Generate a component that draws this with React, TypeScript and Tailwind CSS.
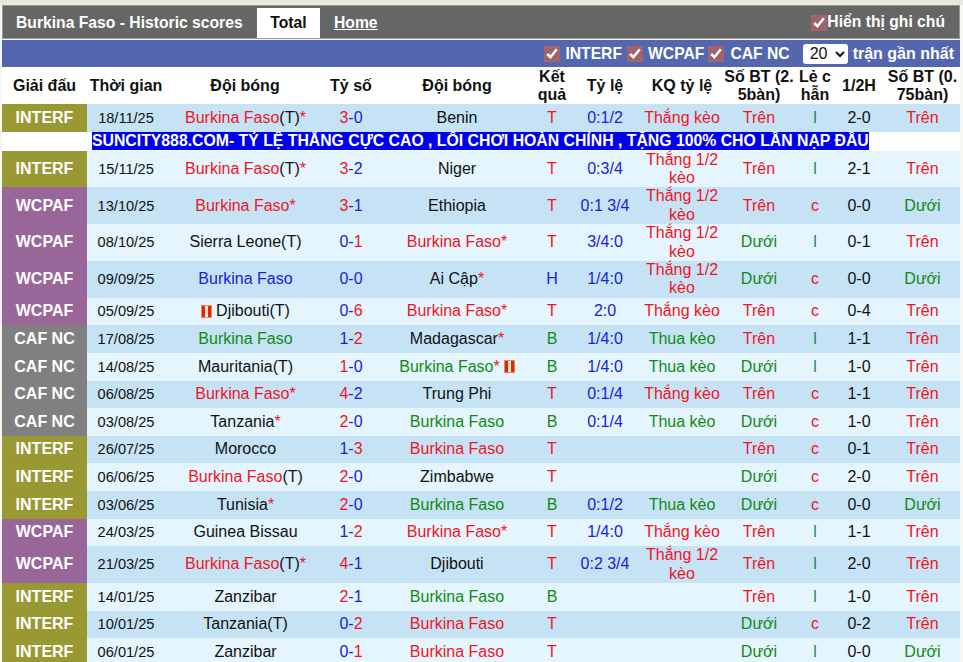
const R = "text-[#f2141e]";
const G = "text-[#118a11]";
const B = "text-[#2020d8]";
const K = "text-[#111]";

type Row = {
  lg: "INTERF" | "WCPAF" | "CAF NC";
  date: string;
  h: string; hc: string; hs?: string; hStar?: boolean; hCard?: boolean;
  s1: string; s2: string;
  a: string; ac: string; aStar?: boolean; aCard?: boolean;
  res: string; odd: string; kq: string; ou: string; lc: string; half: string; ou2: string;
};

const BF = "Burkina Faso";
const rows: Row[] = [
  { lg: "INTERF", date: "18/11/25", h: BF, hc: R, hs: "(T)", hStar: true, s1: "3", s2: "0", a: "Benin", ac: K, res: "T", odd: "0:1/2", kq: "Thắng kèo", ou: "Trên", lc: "l", half: "2-0", ou2: "Trên" },
  { lg: "INTERF", date: "15/11/25", h: BF, hc: R, hs: "(T)", hStar: true, s1: "3", s2: "2", a: "Niger", ac: K, res: "T", odd: "0:3/4", kq: "Thắng 1/2 kèo", ou: "Trên", lc: "l", half: "2-1", ou2: "Trên" },
  { lg: "WCPAF", date: "13/10/25", h: BF, hc: R, hStar: true, s1: "3", s2: "1", a: "Ethiopia", ac: K, res: "T", odd: "0:1 3/4", kq: "Thắng 1/2 kèo", ou: "Trên", lc: "c", half: "0-0", ou2: "Dưới" },
  { lg: "WCPAF", date: "08/10/25", h: "Sierra Leone(T)", hc: K, s1: "0", s2: "1", a: BF, ac: R, aStar: true, res: "T", odd: "3/4:0", kq: "Thắng 1/2 kèo", ou: "Dưới", lc: "l", half: "0-1", ou2: "Trên" },
  { lg: "WCPAF", date: "09/09/25", h: BF, hc: B, s1: "0", s2: "0", a: "Ai Cập", ac: K, aStar: true, res: "H", odd: "1/4:0", kq: "Thắng 1/2 kèo", ou: "Dưới", lc: "c", half: "0-0", ou2: "Dưới" },
  { lg: "WCPAF", date: "05/09/25", h: "Djibouti(T)", hc: K, hCard: true, s1: "0", s2: "6", a: BF, ac: R, aStar: true, res: "T", odd: "2:0", kq: "Thắng kèo", ou: "Trên", lc: "c", half: "0-4", ou2: "Trên" },
  { lg: "CAF NC", date: "17/08/25", h: BF, hc: G, s1: "1", s2: "2", a: "Madagascar", ac: K, aStar: true, res: "B", odd: "1/4:0", kq: "Thua kèo", ou: "Trên", lc: "l", half: "1-1", ou2: "Trên" },
  { lg: "CAF NC", date: "14/08/25", h: "Mauritania(T)", hc: K, s1: "1", s2: "0", a: BF, ac: G, aStar: true, aCard: true, res: "B", odd: "1/4:0", kq: "Thua kèo", ou: "Dưới", lc: "l", half: "1-0", ou2: "Trên" },
  { lg: "CAF NC", date: "06/08/25", h: BF, hc: R, hStar: true, s1: "4", s2: "2", a: "Trung Phi", ac: K, res: "T", odd: "0:1/4", kq: "Thắng kèo", ou: "Trên", lc: "c", half: "1-1", ou2: "Trên" },
  { lg: "CAF NC", date: "03/08/25", h: "Tanzania", hc: K, hStar: true, s1: "2", s2: "0", a: BF, ac: G, res: "B", odd: "0:1/4", kq: "Thua kèo", ou: "Dưới", lc: "c", half: "1-0", ou2: "Trên" },
  { lg: "INTERF", date: "26/07/25", h: "Morocco", hc: K, s1: "1", s2: "3", a: BF, ac: R, res: "T", odd: "", kq: "", ou: "Trên", lc: "c", half: "0-1", ou2: "Trên" },
  { lg: "INTERF", date: "06/06/25", h: BF, hc: R, hs: "(T)", s1: "2", s2: "0", a: "Zimbabwe", ac: K, res: "T", odd: "", kq: "", ou: "Dưới", lc: "c", half: "2-0", ou2: "Trên" },
  { lg: "INTERF", date: "03/06/25", h: "Tunisia", hc: K, hStar: true, s1: "2", s2: "0", a: BF, ac: G, res: "B", odd: "0:1/2", kq: "Thua kèo", ou: "Dưới", lc: "c", half: "0-0", ou2: "Dưới" },
  { lg: "WCPAF", date: "24/03/25", h: "Guinea Bissau", hc: K, s1: "1", s2: "2", a: BF, ac: R, aStar: true, res: "T", odd: "1/4:0", kq: "Thắng kèo", ou: "Trên", lc: "l", half: "1-1", ou2: "Trên" },
  { lg: "WCPAF", date: "21/03/25", h: BF, hc: R, hs: "(T)", hStar: true, s1: "4", s2: "1", a: "Djibouti", ac: K, res: "T", odd: "0:2 3/4", kq: "Thắng 1/2 kèo", ou: "Trên", lc: "l", half: "2-0", ou2: "Trên" },
  { lg: "INTERF", date: "14/01/25", h: "Zanzibar", hc: K, s1: "2", s2: "1", a: BF, ac: G, res: "B", odd: "", kq: "", ou: "Trên", lc: "l", half: "1-0", ou2: "Trên" },
  { lg: "INTERF", date: "10/01/25", h: "Tanzania(T)", hc: K, s1: "0", s2: "2", a: BF, ac: R, res: "T", odd: "", kq: "", ou: "Dưới", lc: "c", half: "0-2", ou2: "Trên" },
  { lg: "INTERF", date: "06/01/25", h: "Zanzibar", hc: K, s1: "0", s2: "1", a: BF, ac: R, res: "T", odd: "", kq: "", ou: "Dưới", lc: "l", half: "0-0", ou2: "Dưới" },
];

const GRID = "grid grid-cols-[85px_78px_160px_52px_160px_30px_76px_78px_76px_36px_52px_75px]";
const lgBg = { INTERF: "bg-[#999933]", WCPAF: "bg-[#996699]", "CAF NC": "bg-[#808080]" } as const;
const resColor = (r: string) => (r === "T" ? R : r === "B" ? G : B);
const ouColor = (v: string) => (v === "Trên" ? R : G);
const Cell = "flex items-center justify-center text-center";

function Card({ className }: { className: string }) {
  return (
    <span className={`inline-flex h-[13px] w-[11px] justify-center border border-[#f58a4a] bg-[#dd2a06] ${className}`}>
      <span className="h-full w-[3px] bg-[#ffe4d8]" />
    </span>
  );
}

function Star() {
  return <span className={R}>*</span>;
}

function Check() {
  return <input type="checkbox" defaultChecked className="h-[16px] w-[16px] accent-[#a2626a]" />;
}

function MatchRow({ r, i }: { r: Row; i: number }) {
  const tall = r.kq.includes("1/2");
  const dark = i % 2 === 0;
  const win1 = Number(r.s1) > Number(r.s2);
  const win2 = Number(r.s2) > Number(r.s1);
  return (
    <div className={`${GRID} ${tall ? "h-[36.8px]" : "h-[27.6px]"} ${dark ? "bg-[#c6e3f6]" : "bg-[#e4f5fd]"} ${K}`}>
      <div className={`${Cell} ${lgBg[r.lg]} font-bold text-white`}>{r.lg}</div>
      <div className={`${Cell} text-[14.6px]`}>{r.date}</div>
      <div className={`${Cell} whitespace-pre pl-[1px]`}>
        {r.hCard && <Card className="mr-[4px]" />}
        <span className={r.hc}>{r.h}</span>
        {r.hs}
        {r.hStar && <Star />}
      </div>
      <div className={Cell}>
        <span className={win1 ? R : B}>{r.s1}</span>
        <span className={B}>-</span>
        <span className={win2 ? R : B}>{r.s2}</span>
      </div>
      <div className={`${Cell} whitespace-pre`}>
        <span className={r.ac}>{r.a}</span>
        {r.aStar && <Star />}
        {r.aCard && <Card className="ml-[4px]" />}
      </div>
      <div className={`${Cell} ${resColor(r.res)}`}>{r.res}</div>
      <div className={`${Cell} ${B}`}>{r.odd}</div>
      <div className={`${Cell} leading-[18.4px] ${r.kq.startsWith("Thắng") ? R : G}`}>{r.kq}</div>
      <div className={`${Cell} ${ouColor(r.ou)}`}>{r.ou}</div>
      <div className={`${Cell} ${r.lc === "c" ? R : "text-[#118a55]"}`}>{r.lc}</div>
      <div className={Cell}>{r.half}</div>
      <div className={`${Cell} ${ouColor(r.ou2)}`}>{r.ou2}</div>
    </div>
  );
}

export default function App() {
  const heads = ["Giải đấu", "Thời gian", "Đội bóng", "Tỷ số", "Đội bóng", "Kết quả", "Tỷ lệ", "KQ tỷ lệ", "Số BT (2. 5bàn)", "Lẻ c hẫn", "1/2H", "Số BT (0. 75bàn)"];
  return (
    <div className="h-[662px] w-[963px] overflow-hidden bg-[#f6f6f2] pl-[2px] pr-[3px] font-['Liberation_Sans',Arial,sans-serif] text-[16px] leading-[18.4px]">
      <div className="-mx-[2px] h-[5px] w-[963px] bg-[#e8e8df]" />
      <div className="flex h-[34px] items-stretch border border-[#999] bg-[#666666] text-[15.7px] font-bold text-white">
        <div className="flex w-[254px] items-center pl-[13px] pt-[2px]">Burkina Faso - Historic scores</div>
        <div className="mt-[2px] flex w-[63px] items-center justify-center bg-white text-[#111]">Total</div>
        <div className="flex items-center pl-[14px] pt-[2px] underline">Home</div>
        <div className="ml-auto flex items-center pr-[14px] pt-[1px]">
          <Check />
          <span>Hiển thị ghi chú</span>
        </div>
      </div>
      <div className="mt-[1px] flex h-[27px] items-center justify-end bg-[#5366ae] pr-[6px] text-[15.7px] font-bold text-white">
        <Check />
        <span className="ml-[5px] mr-[5px] pt-[1px]">INTERF</span>
        <Check />
        <span className="ml-[5px] mr-[4px] pt-[1px]">WCPAF</span>
        <Check />
        <span className="ml-[6px] mr-[13px] pt-[1px]">CAF NC</span>
        <select defaultValue="20" className="mr-[5px] h-[20px] w-[45px] rounded-[3px] bg-white pl-[3px] text-[16px] font-normal text-[#111]">
          <option>20</option>
        </select>
        <span className="pt-[1px] text-[16px]">trận gần nhất</span>
      </div>
      <div className={`${GRID} h-[37px] bg-white pt-[1px] font-bold leading-[18.4px] text-[#111]`}>
        {heads.map((h, i) => (
          <div key={i} className={Cell}>{h}</div>
        ))}
      </div>
      <MatchRow r={rows[0]} i={0} />
      <div className="flex h-[19px] items-center bg-white pl-[90px]">
        <span className="whitespace-nowrap bg-[#0000ee] text-[15.8px] font-bold leading-[18px] text-white">
          SUNCITY888.COM- TỶ LỆ THẮNG CỰC CAO , LỐI CHƠI HOÀN CHỈNH , TẶNG 100% CHO LẦN NẠP ĐẦU
        </span>
      </div>
      {rows.slice(1).map((r, i) => (
        <MatchRow key={i} r={r} i={i + 1} />
      ))}
    </div>
  );
}
